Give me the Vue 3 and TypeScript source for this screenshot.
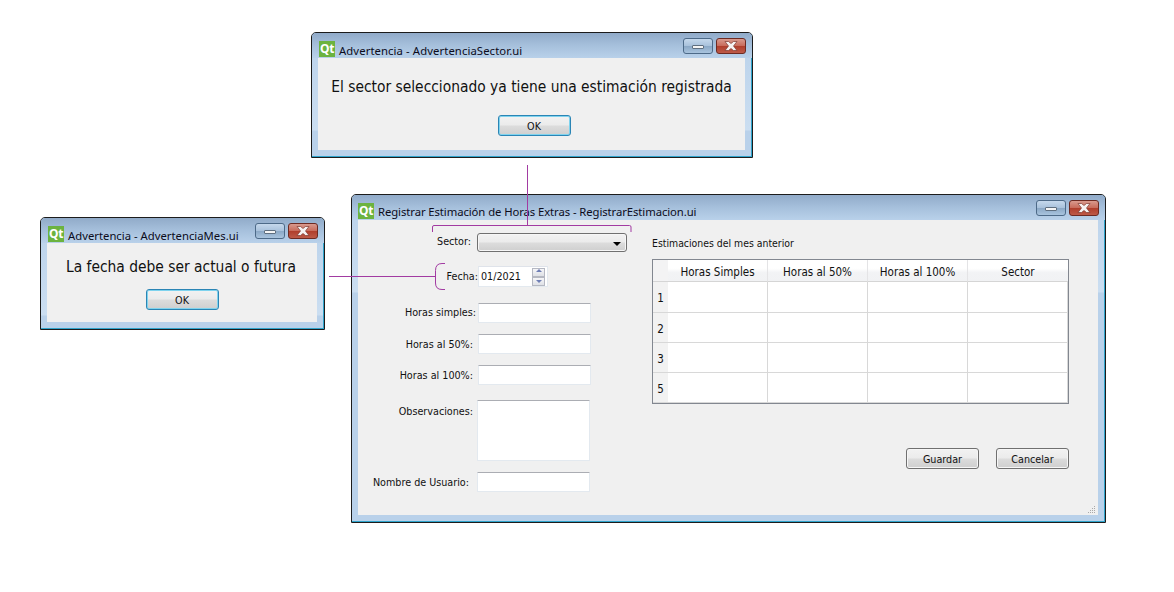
<script setup lang="ts">
const formRows = [
  { label: 'Horas simples:', cls: 'r-simple' },
  { label: 'Horas al 50%:', cls: 'r-50' },
  { label: 'Horas al 100%:', cls: 'r-100' },
]
const columns = ['Horas Simples', 'Horas al 50%', 'Horas al 100%', 'Sector']
const rows = ['1', '2', '3', '5']
</script>

<template>
  <div class="desktop">
    <section class="win win-sector">
      <header class="title">
        <span class="qt">Qt</span>
        <span class="title-text">Advertencia - AdvertenciaSector.ui</span>
        <span class="ctl min"><i></i></span>
        <span class="ctl close"><svg width="16" height="10" viewBox="0 0 16 10"><path d="M2 .5h3.500L8 2.500 10.500.5H14L10.500 5 14 9.500h-3.500L8 7.500 5.500 9.500H2L5.500 5z" fill="#f6f2f2" stroke="#7d3a30" stroke-width=".7"/></svg></span>
      </header>
      <div class="body msg msg-sector">
        <p>El sector seleccionado ya tiene una estimación registrada</p>
        <button class="btn primary">OK</button>
      </div>
    </section>

    <section class="win win-mes">
      <header class="title">
        <span class="qt">Qt</span>
        <span class="title-text">Advertencia - AdvertenciaMes.ui</span>
        <span class="ctl min"><i></i></span>
        <span class="ctl close"><svg width="16" height="10" viewBox="0 0 16 10"><path d="M2 .5h3.500L8 2.500 10.500.5H14L10.500 5 14 9.500h-3.500L8 7.500 5.500 9.500H2L5.500 5z" fill="#f6f2f2" stroke="#7d3a30" stroke-width=".7"/></svg></span>
      </header>
      <div class="body msg msg-mes">
        <p>La fecha debe ser actual o futura</p>
        <button class="btn primary">OK</button>
      </div>
    </section>

    <section class="win win-main">
      <header class="title">
        <span class="qt">Qt</span>
        <span class="title-text">Registrar Estimación de Horas Extras - RegistrarEstimacion.ui</span>
        <span class="ctl min"><i></i></span>
        <span class="ctl close"><svg width="16" height="10" viewBox="0 0 16 10"><path d="M2 .5h3.500L8 2.500 10.500.5H14L10.500 5 14 9.500h-3.500L8 7.500 5.500 9.500H2L5.500 5z" fill="#f6f2f2" stroke="#7d3a30" stroke-width=".7"/></svg></span>
      </header>
      <div class="body main">
        <div class="form">
          <div class="row r-sector">
            <label>Sector:</label>
            <div class="combo"><b></b></div>
          </div>
          <div class="row r-fecha">
            <label>Fecha:</label>
            <div class="spin">
              <span>01/2021</span>
              <div class="spin-btns">
                <em class="up"></em>
                <em class="down"></em>
              </div>
            </div>
          </div>
          <div v-for="r in formRows" :key="r.label" class="row" :class="r.cls">
            <label>{{ r.label }}</label>
            <div class="input"></div>
          </div>
          <div class="row r-obs">
            <label>Observaciones:</label>
            <div class="input area"></div>
          </div>
          <div class="row r-user">
            <label>Nombre de Usuario:</label>
            <div class="input"></div>
          </div>
        </div>
        <div class="side">
          <div class="side-label">Estimaciones del mes anterior</div>
          <div class="table">
            <div class="corner"></div>
            <div v-for="c in columns" :key="c" class="head">{{ c }}</div>
            <template v-for="r in rows" :key="r">
              <div class="rowhead">{{ r }}</div>
              <div v-for="c in columns" :key="c" class="cell"></div>
            </template>
          </div>
          <div class="actions">
            <button class="btn">Guardar</button>
            <button class="btn">Cancelar</button>
          </div>
        </div>
        <svg class="grip" width="10" height="10" viewBox="0 0 10 10" fill="#a9a9a9">
          <rect x="7" y="1" width="1" height="1" /><rect x="5" y="3" width="1" height="1" /><rect x="7" y="3" width="1" height="1" />
          <rect x="3" y="5" width="1" height="1" /><rect x="5" y="5" width="1" height="1" /><rect x="7" y="5" width="1" height="1" />
          <rect x="1" y="7" width="1" height="1" /><rect x="3" y="7" width="1" height="1" /><rect x="5" y="7" width="1" height="1" /><rect x="7" y="7" width="1" height="1" />
        </svg>
      </div>
    </section>

    <svg class="notes" width="1174" height="592" viewBox="0 0 1174 592" fill="none" stroke="#a23ba2" stroke-width="1">
      <path d="M527.500 165V225.500" />
      <path d="M432.500 232V227q0-1.500 1.500-1.500H629.500q1.500 0 1.500 1.500V232" />
      <path d="M329 276.500H435.500" />
      <path d="M445 263.500h-3q-6.500 0-6.500 7V283q0 6.500 6.500 6.500h3" />
    </svg>
  </div>
</template>

<style scoped>
.desktop {
  position: relative;
  width: 1174px;
  height: 592px;
  background: #fff;
  overflow: hidden;
  font-family: "DejaVu Sans Condensed", "DejaVu Sans", sans-serif;
  font-size: 10.700px;
  color: #111;
}
.notes { position: absolute; left: 0; top: 0; }
.win {
  position: absolute;
  box-sizing: border-box;
  border: 1px solid #1c1c1c;
  border-radius: 5px 5px 0 0;
  box-shadow: inset -1px -1px 0 #2fa4cc;
  background: linear-gradient(to bottom, #b9d1ea 0, #cbdef1 97px, #b9d1ea 98px);
  display: flex;
  flex-direction: column;
  padding: 0 7px 7px 6px;
}
.win-sector { left: 311px; top: 32px; width: 442px; height: 126px; }
.win-mes { left: 40px; top: 217px; width: 285px; height: 113px; }
.win-main { left: 351px; top: 194px; width: 755px; height: 329px; }
.title {
  display: flex;
  align-items: flex-start;
  height: 25px;
  margin: 0 -7px 0 -6px;
  padding: 0 6px 0 7px;
  background: linear-gradient(to bottom, #91abc9 0, #a6c0dc 50%, #b9d1ea 100%);
  border-radius: 4px 4px 0 0;
  flex: none;
}
.win-main .title { padding-left: 6px; }
.qt {
  width: 16px;
  height: 16px;
  margin-top: 8px;
  margin-right: 4px;
  background: #6cb33f;
  color: #fff;
  font: bold 12px/16px "Noto Sans", sans-serif;
  text-align: center;
  letter-spacing: -0.4px;
  flex: none;
  overflow: hidden;
}
.title-text {
  margin-top: 10px;
  font-family: "Noto Sans", sans-serif;
  font-size: 11.300px;
  line-height: 16px;
  color: #0c0c1c;
  flex: 1;
  white-space: nowrap;
}
.win-sector .title-text { letter-spacing: 0.09px; }
.win-main .title-text { letter-spacing: -0.08px; margin-top: 9px; }
.ctl {
  box-sizing: border-box;
  width: 30px;
  height: 16px;
  margin-top: 5px;
  border: 1px solid #4d6a88;
  border-radius: 3px;
  display: flex;
  align-items: center;
  justify-content: center;
  flex: none;
}
.min {
  margin-right: 3px;
  background: linear-gradient(to bottom, #c5d8ec 0, #a9c2dc 48%, #8ba8c6 52%, #a9c4de 100%);
}
.min i {
  display: block;
  width: 12px;
  height: 4px;
  margin-top: 2px;
  box-sizing: border-box;
  background: #f5f5f5;
  border: 1px solid #5f6f80;
  border-radius: 1px;
}
.close {
  border-color: #6d2a22;
  background: linear-gradient(to bottom, #d99a8e 0, #c86c5c 48%, #b03e2c 52%, #bd5a48 100%);
}
.body {
  background: #f0f0f0;
  flex: 1;
  min-height: 0;
  position: relative;
}
.msg {
  display: flex;
  flex-direction: column;
  align-items: center;
}
.msg p {
  margin: 0;
  font-size: 15.400px;
  line-height: 20px;
  white-space: nowrap;
}
.msg-sector p { padding-top: 19px; }
.msg-sector .btn { margin-top: 18px; margin-left: 5px; }
.msg-mes p { padding-top: 14px; padding-right: 2px; }
.msg-mes .btn { margin-top: 12px; }
.btn {
  box-sizing: border-box;
  width: 73px;
  height: 21px;
  padding: 1px 0 0;
  border: 1px solid #707070;
  border-radius: 3px;
  background: linear-gradient(to bottom, #f2f2f2 0, #ebebeb 48%, #dcdcdc 52%, #cfcfcf 100%);
  box-shadow: inset 0 0 0 1px #f6f6f6;
  font: inherit;
  color: #111;
}
.btn.primary {
  border-color: #2b85b5;
  box-shadow: inset 0 0 0 1px #7fd3ee;
}
.main {
  display: flex;
  align-items: flex-start;
}
.form {
  width: 269px;
  flex: none;
  padding-top: 13px;
}
.row {
  display: flex;
  align-items: center;
}
.row label {
  text-align: right;
  white-space: nowrap;
  flex: none;
}
.r-sector label { width: 113px; margin-right: 6px; padding-bottom: 2px; }
.r-fecha { margin-top: 14px; }
.r-fecha label { width: 120px; }
.r-simple { margin-top: 16px; }
.r-simple label { width: 118px; margin-right: 2px; padding-bottom: 2px; }
.r-50 { margin-top: 11px; }
.r-50 label, .r-100 label { width: 115px; margin-right: 5px; }
.r-100 { margin-top: 11px; }
.r-obs { margin-top: 15px; align-items: flex-start; }
.r-obs label { width: 115px; margin-right: 4px; padding-top: 5px; }
.r-user { margin-top: 11px; }
.r-user label { width: 111px; margin-right: 8px; }
.combo {
  position: relative;
  box-sizing: border-box;
  width: 150px;
  height: 19px;
  border: 1px solid #707070;
  border-radius: 3px;
  background: linear-gradient(to bottom, #f2f2f2 0, #ebebeb 48%, #dcdcdc 52%, #cfcfcf 100%);
  box-shadow: inset 0 0 0 1px #f6f6f6;
}
.combo b {
  position: absolute;
  right: 5px;
  top: 8px;
  border: 4px solid transparent;
  border-top: 4px solid #000;
  border-bottom: 0;
}
.spin {
  box-sizing: border-box;
  width: 70px;
  height: 21px;
  background: #fff;
  border: 1px solid #e3e9ef;
  border-top-color: #dfe3ea;
  display: flex;
  align-items: center;
  justify-content: space-between;
  padding-left: 2px;
}
.spin-btns {
  display: flex;
  flex-direction: column;
  margin-right: 2px;
}
.spin-btns em {
  display: block;
  position: relative;
  box-sizing: border-box;
  width: 13px;
  height: 9px;
  border: 1px solid #b5b8c2;
  background: linear-gradient(to bottom, #f6f6f8, #dfe1e6);
}
.up::after, .down::after {
  content: "";
  position: absolute;
  left: 3px;
  border: 3px solid transparent;
}
.up::after { top: 0; border-top: 0; border-bottom: 3px solid #6f7fb5; }
.down::after { top: 2px; border-bottom: 0; border-top: 3px solid #6f7fb5; }
.input {
  box-sizing: border-box;
  width: 113px;
  height: 20px;
  background: #fff;
  border: 1px solid #e3e9ef;
  border-top-color: #abadb3;
  border-radius: 1px;
}
.input.area { height: 61px; }
.side {
  width: 417px;
  margin-left: 25px;
  padding-top: 16px;
}
.side-label {
  height: 14px;
  line-height: 14px;
  margin-bottom: 9px;
  font-size: 10.400px;
}
.table {
  box-sizing: border-box;
  width: 417px;
  height: 145px;
  border: 1px solid #828790;
  background: #fff;
  display: grid;
  grid-template-columns: 15px repeat(4, 100px);
  grid-template-rows: 22px 31px repeat(3, 30px);
  overflow: hidden;
}
.corner, .head {
  background: linear-gradient(to bottom, #fff 0, #fff 40%, #f2f3f5 60%, #f1f2f4 100%);
  border-bottom: 1px solid #d5d5d5;
}
.corner { background: #f3f3f4; }
.head {
  border-right: 1px solid #e4e4e6;
  text-align: center;
  font-size: 11.500px;
  line-height: 24px;
  white-space: nowrap;
}
.head:nth-child(5) { border-right: 0; }
.rowhead {
  background: #f2f2f2;
  border-bottom: 1px solid #d8d8d8;
  text-align: center;
  font-size: 11.500px;
  line-height: 33px;
}
.cell {
  border-right: 1px solid #d8d8d8;
  border-bottom: 1px solid #d8d8d8;
}
.actions {
  display: flex;
  justify-content: flex-end;
  gap: 17px;
  margin-top: 44px;
}
.grip { position: absolute; right: 1px; bottom: 0; }
</style>
